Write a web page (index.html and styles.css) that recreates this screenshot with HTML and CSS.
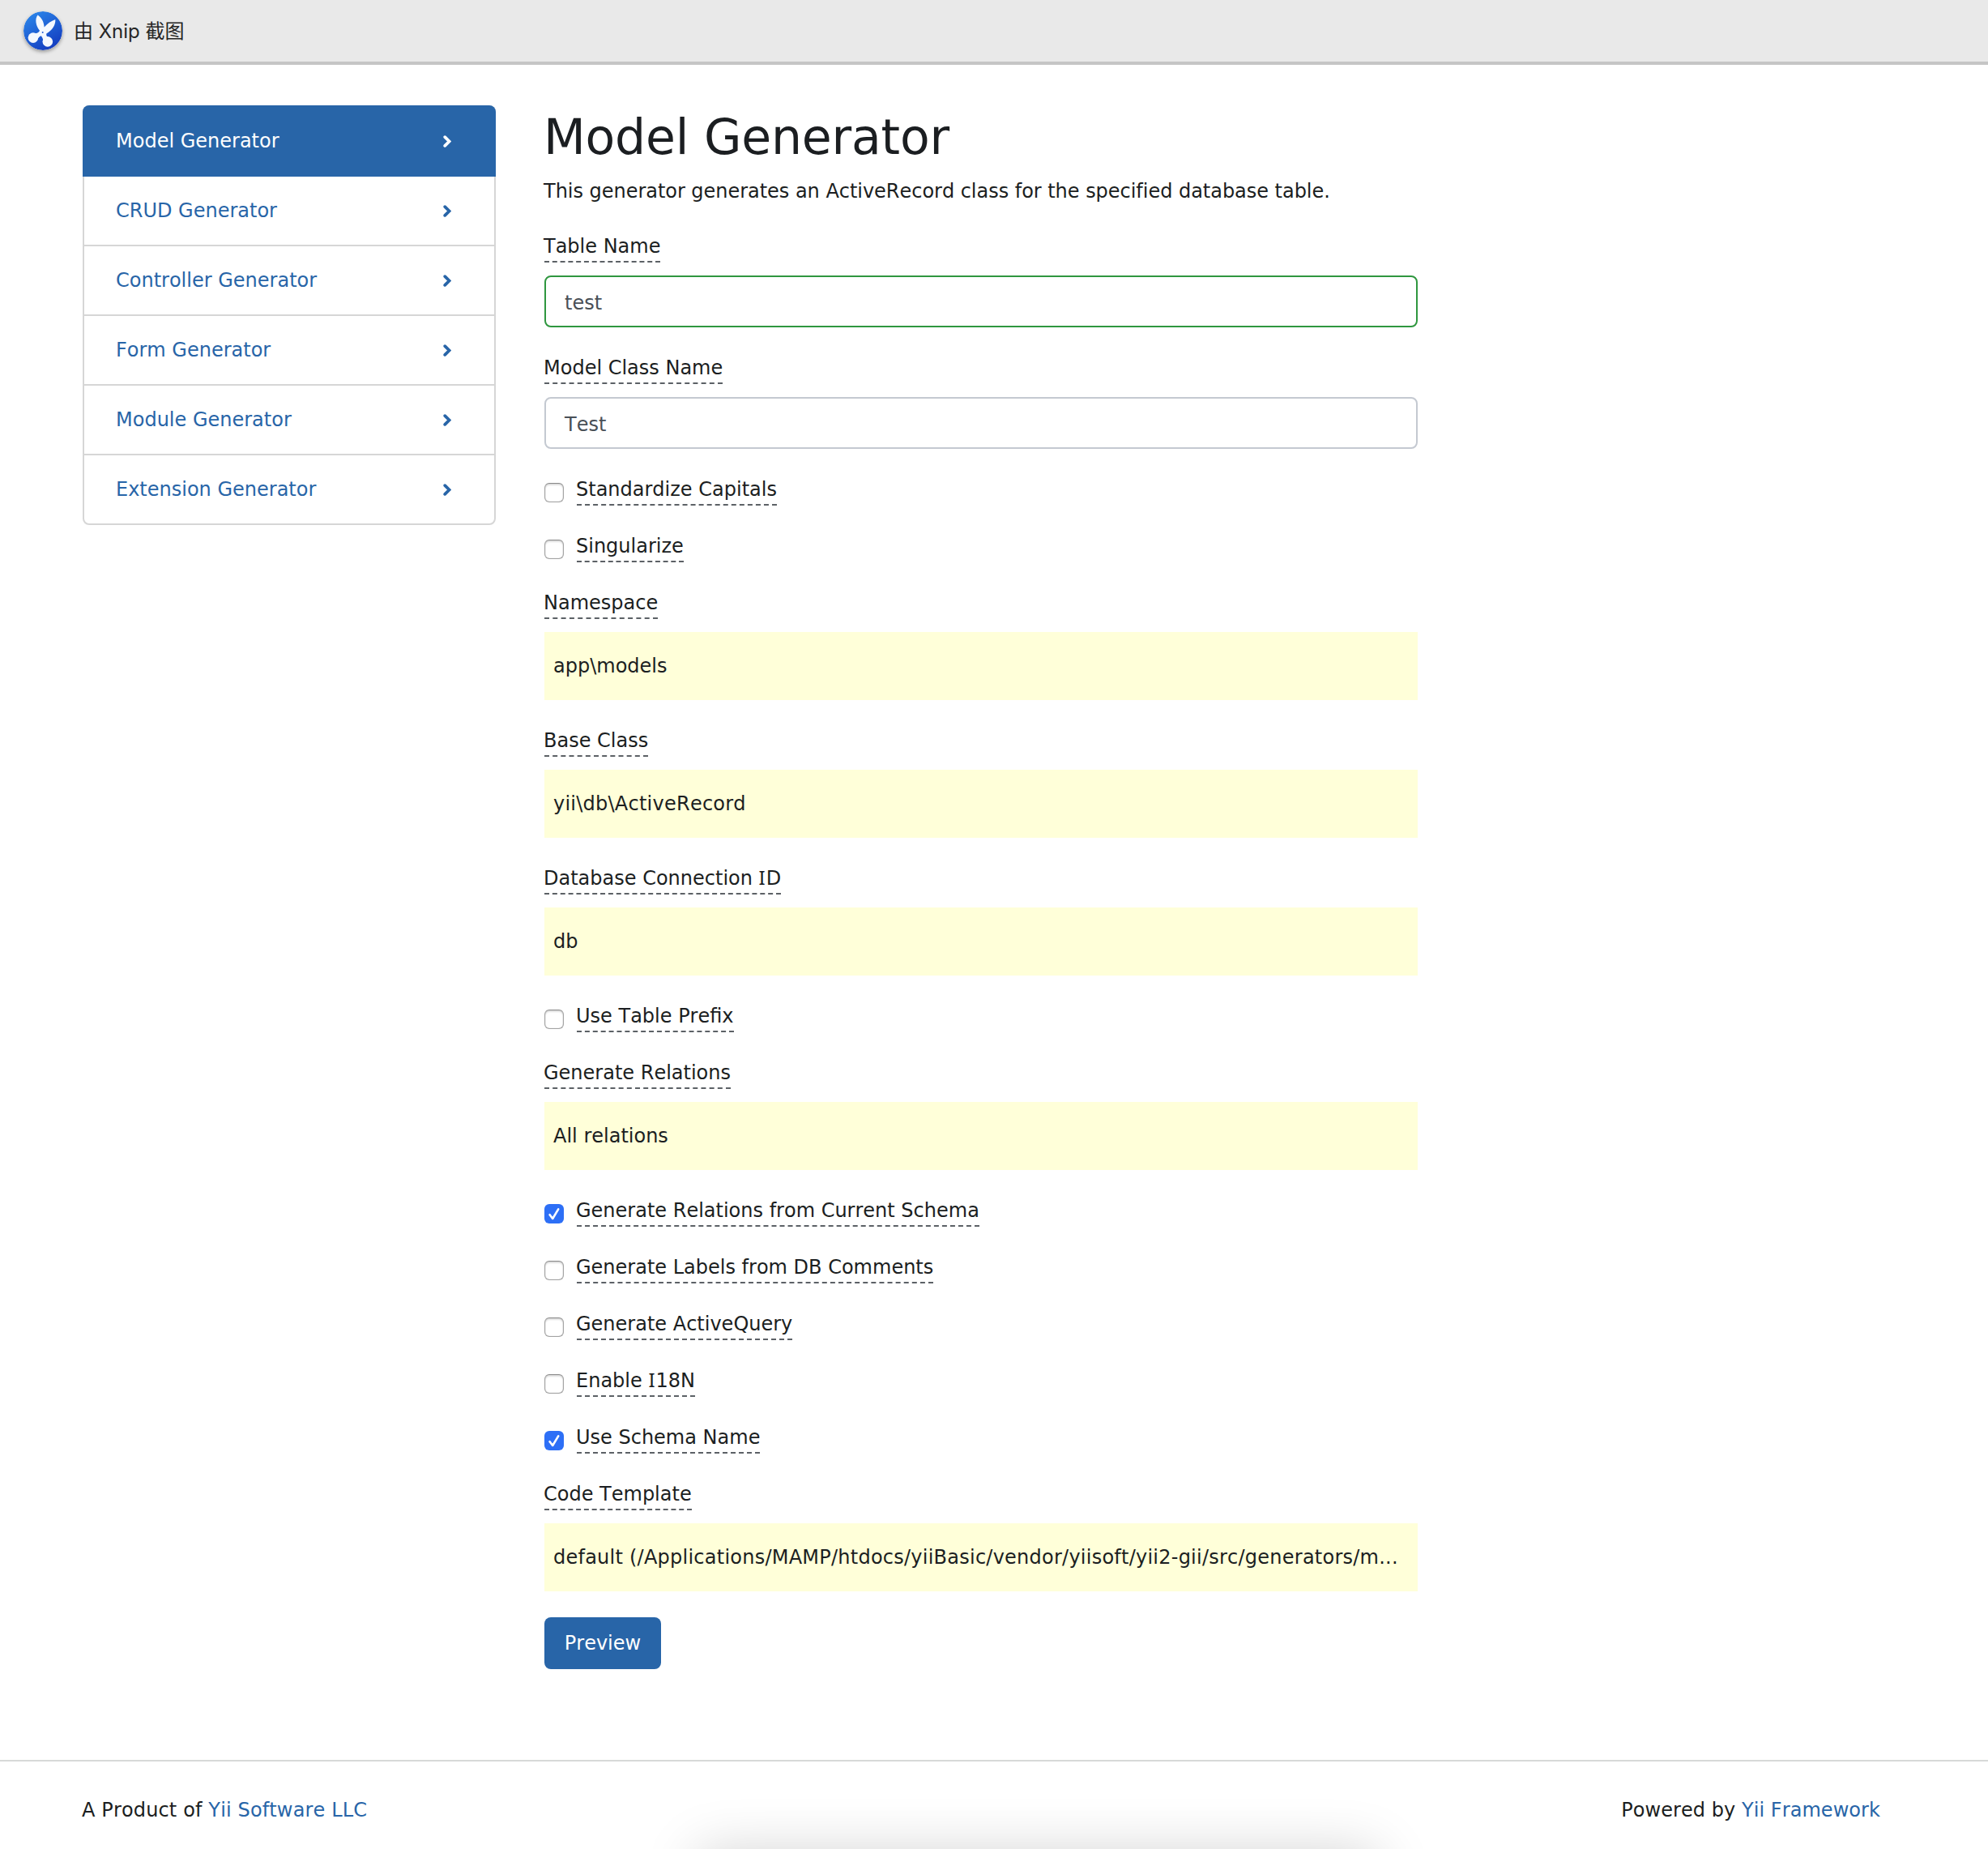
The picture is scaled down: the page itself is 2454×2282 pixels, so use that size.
FILE: index.html
```
<!DOCTYPE html>
<html lang="en">
<head>
<meta charset="utf-8">
<title>Model Generator</title>
<link rel="stylesheet" href="styles.css">
</head>
<body>
<svg class="defs" width="0" height="0" aria-hidden="true">
  <symbol id="chevron" viewBox="0 0 10 15"><path d="M2.2 2.1 7.6 7.5 2.2 12.9" fill="none" stroke="currentColor" stroke-width="3.7" stroke-linecap="round" stroke-linejoin="miter"/></symbol>
</svg>
<header class="capture-bar">
  <svg class="logo" viewBox="0 0 48 48">
    <defs><linearGradient id="blue" x1="0.2" y1="0" x2="0.8" y2="1"><stop offset="0" stop-color="#2b86ea"/><stop offset="1" stop-color="#1238bd"/></linearGradient></defs>
    <circle cx="24" cy="24" r="24" fill="url(#blue)"/>
    <g fill="#f4f8ff">
      <path d="M17.6 4.5C22.6 8 25.3 13.5 25.6 19.6C29.5 15.2 34 11.8 39.3 10C39.8 16.5 36 23 28.3 27.4C28 29.4 28.5 30.8 30 31.6L24.5 36C23.8 33.6 23 31.8 21.8 30.2C20.3 30.6 19.3 31.4 18.5 33L12.6 27.2C16.6 27.6 19 26.2 20 23.8C15.2 18 13.6 9.5 17.6 4.5Z"/>
      <circle cx="11.9" cy="32.6" r="6.3"/>
      <circle cx="29.8" cy="37.4" r="6.3"/>
    </g>
    <circle cx="23.7" cy="26" r="1" fill="#2560d6"/>
  </svg>
  <span class="capture-text">由 Xnip 截图</span>
</header>
<div class="page">
  <nav class="menu">
    <a class="menu-item active"><span>Model Generator</span><svg class="chev"><use href="#chevron"/></svg></a>
    <a class="menu-item"><span>CRUD Generator</span><svg class="chev"><use href="#chevron"/></svg></a>
    <a class="menu-item"><span>Controller Generator</span><svg class="chev"><use href="#chevron"/></svg></a>
    <a class="menu-item"><span>Form Generator</span><svg class="chev"><use href="#chevron"/></svg></a>
    <a class="menu-item"><span>Module Generator</span><svg class="chev"><use href="#chevron"/></svg></a>
    <a class="menu-item"><span>Extension Generator</span><svg class="chev"><use href="#chevron"/></svg></a>
  </nav>
  <main class="content">
    <h1>Model Generator</h1>
    <div class="form">
      <p>This generator generates an ActiveRecord class for the specified database table.</p>
      <div class="field"><label>Table Name</label><div class="input valid">test</div></div>
      <div class="field"><label>Model Class Name</label><div class="input">Test</div></div>
      <div class="check"><i class="box"></i><label>Standardize Capitals</label></div>
      <div class="check"><i class="box"></i><label>Singularize</label></div>
      <div class="field"><label>Namespace</label><div class="sticky">app\models</div></div>
      <div class="field"><label>Base Class</label><div class="sticky path">yii\db\ActiveRecord</div></div>
      <div class="field"><label>Database Connection <span class="slab">I</span>D</label><div class="sticky">db</div></div>
      <div class="check"><i class="box"></i><label>Use Table Prefix</label></div>
      <div class="field"><label>Generate Relations</label><div class="sticky">All relations</div></div>
      <div class="check"><i class="box on"><svg viewBox="0 0 24 24"><path d="M6.6 13.2 10.2 18 17.2 6.4"/></svg></i><label>Generate Relations from Current Schema</label></div>
      <div class="check"><i class="box"></i><label>Generate Labels from DB Comments</label></div>
      <div class="check"><i class="box"></i><label>Generate ActiveQuery</label></div>
      <div class="check"><i class="box"></i><label>Enable <span class="slab">I</span>18N</label></div>
      <div class="check"><i class="box on"><svg viewBox="0 0 24 24"><path d="M6.6 13.2 10.2 18 17.2 6.4"/></svg></i><label>Use Schema Name</label></div>
      <div class="field"><label>Code Template</label><div class="sticky path">default (/Applications/MAMP/htdocs/yiiBasic/vendor/yiisoft/yii2-gii/src/generators/m...</div></div>
      <button class="preview">Preview</button>
    </div>
  </main>
</div>
<footer class="footer">
  <span class="product">A Product of <a>Yii Software LLC</a></span>
  <span>Powered by <a>Yii Framework</a></span>
  <div class="window-shadow"></div>
</footer>
</body>
</html>
```
FILE: styles.css
```
* { box-sizing: border-box; }
body {
  margin: 0;
  height: 2282px;
  overflow: hidden;
  display: flex;
  flex-direction: column;
  background: #fff;
  color: #1b1e21;
  font: 24px/36px "DejaVu Sans", Verdana, sans-serif;
  font-kerning: none;
}
.defs { position: absolute; }
.capture-bar {
  height: 80px;
  flex: none;
  display: flex;
  align-items: center;
  gap: 14px;
  padding-left: 29px;
  background: #e9e9e9;
  border-bottom: 4px solid #c5c5c5;
}
.logo {
  width: 48px;
  height: 48px;
  border-radius: 50%;
  box-shadow: 0 2px 4px rgba(0, 0, 0, .35);
}
.capture-text {
  padding-top: 1px;
  font: 24px/36px Inter, "Noto Sans CJK SC", sans-serif;
  color: #262626;
}
.page {
  display: flex;
  align-items: flex-start;
  gap: 60px;
  padding: 50px 102px 0;
}
.menu {
  width: 510px;
  border: 2px solid #d6d6d6;
  border-radius: 8px;
}
.menu-item {
  display: flex;
  align-items: center;
  justify-content: space-between;
  height: 86px;
  padding: 1px 53px 1px 39px;
  border-bottom: 2px solid #d6d6d6;
  color: #2865a8;
}
.menu-item:last-child { border-bottom: 0; height: 84px; padding-top: 0; padding-bottom: 0; }
.menu-item.active {
  height: 88px;
  margin: -2px -2px 0;
  padding: 0 55px 0 41px;
  background: #2865a8;
  border: 0;
  border-radius: 8px 8px 0 0;
  color: #fff;
}
.chev { width: 10px; height: 15px; }
.content { width: 1078px; }
h1 {
  margin: 0 0 10px;
  font-size: 60px;
  line-height: 78px;
  font-weight: 400;
  letter-spacing: -.2px;
  text-indent: -1px;
}
.form {
  display: flex;
  flex-direction: column;
  align-items: flex-start;
  gap: 32px;
}
p { margin: 0; text-indent: -1px; letter-spacing: -.03px; }
.field {
  width: 100%;
  display: flex;
  flex-direction: column;
  align-items: flex-start;
  gap: 16px;
}
label {
  height: 38px;
  border-bottom: 2px dashed #5c6166;
  white-space: nowrap;
  text-indent: -1px;
}
.slab { font-family: "Noto Sans", sans-serif; line-height: 1; letter-spacing: 1px; }
.input {
  width: 100%;
  height: 64px;
  padding: 14px 23px 10px;
  border: 2px solid #c4c9d1;
  border-radius: 8px;
  color: #495057;
}
.input.valid { border-color: #2f973f; }
.sticky {
  width: 100%;
  height: 84px;
  padding: 24px 11px;
  background: #ffffd9;
  white-space: nowrap;
}
.path { letter-spacing: .24px; }
.check { display: flex; gap: 16px; }
.box {
  width: 24px;
  height: 24px;
  margin-top: 10px;
  border: 1px solid #a3a3a3;
  border-top-color: #8a8a8a;
  border-radius: 6px;
  box-shadow: inset 0 2px 2px rgba(0, 0, 0, .12), inset 0 0 1px rgba(0, 0, 0, .4);
}
.box.on {
  border: 0;
  background: #2d6ff6;
  box-shadow: none;
}
.box svg { display: block; }
.box path {
  fill: none;
  stroke: #fff;
  stroke-width: 2.6;
  stroke-linecap: round;
  stroke-linejoin: round;
}
.preview {
  width: 144px;
  height: 64px;
  padding: 0;
  border: 0;
  border-radius: 8px;
  background: #2865a8;
  color: #fff;
  font: inherit;
}
.footer {
  position: relative;
  height: 110px;
  margin-top: 112px;
  flex: none;
  display: flex;
  justify-content: space-between;
  padding: 42px 133px 0 101px;
  border-top: 2px solid #d7d9d8;
  letter-spacing: .06px;
}
.product { letter-spacing: .14px; }
.footer a { color: #2865a8; }
.window-shadow {
  position: absolute;
  left: 862px;
  right: 754px;
  top: 116px;
  height: 100px;
  box-shadow: 0 -4px 68px rgba(0, 0, 0, .18);
}
```
